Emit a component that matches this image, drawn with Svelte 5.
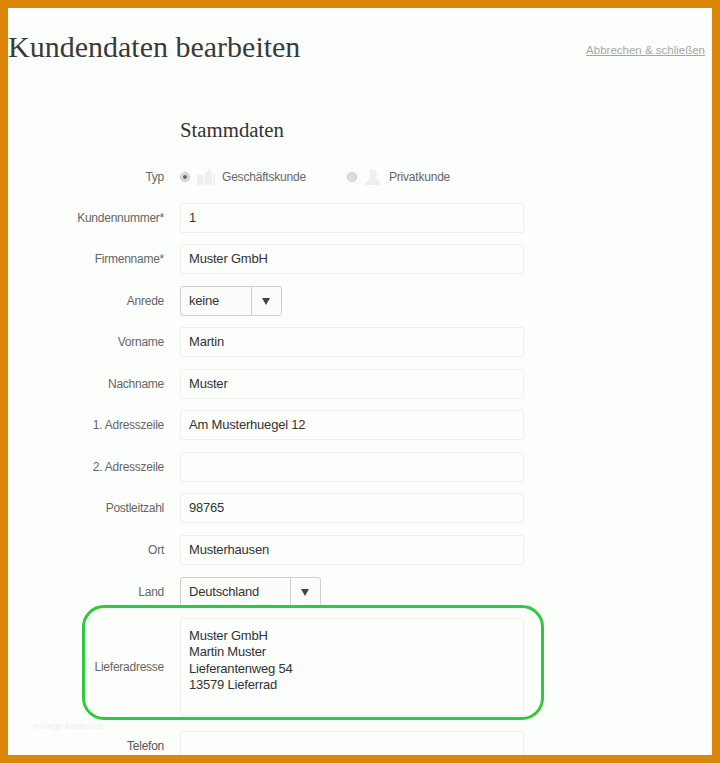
<script>
  const rowsTop = [
    { label: 'Kundennummer*', value: '1' },
    { label: 'Firmenname*', value: 'Muster GmbH' },
    { label: 'Anrede', value: 'keine', select: 'short' },
    { label: 'Vorname', value: 'Martin' },
    { label: 'Nachname', value: 'Muster' },
    { label: '1. Adresszeile', value: 'Am Musterhuegel 12' },
    { label: '2. Adresszeile', value: '' },
    { label: 'Postleitzahl', value: '98765' },
    { label: 'Ort', value: 'Musterhausen' },
    { label: 'Land', value: 'Deutschland', select: 'long' }
  ];

  const address = ['Muster GmbH', 'Martin Muster', 'Lieferantenweg 54', '13579 Lieferrad'];
</script>

<div class="frame">
  <div class="page">
    <header class="head">
      <h1>Kundendaten bearbeiten</h1>
      <a class="cancel" href="#top">Abbrechen &amp; schließen</a>
    </header>

    <h2>Stammdaten</h2>

    <div class="row type-row">
      <span class="label">Typ</span>
      <div class="types">
        <span class="type">
          <span class="radio checked"></span>
          <svg class="type-icon" viewBox="0 0 18 16" width="18" height="16">
            <path d="M0 6h7v10H0zM8 3h3V0h3v3h1v13H8zM16 6h2v10h-2z" fill="#eef0ee" />
          </svg>
          <span class="type-text">Geschäftskunde</span>
        </span>
        <span class="type">
          <span class="radio"></span>
          <svg class="type-icon" viewBox="0 0 18 16" width="18" height="16">
            <circle cx="9" cy="4.5" r="4" fill="#eef0ee" />
            <path d="M7 8h4l6 6v2H1v-2z" fill="#eef0ee" />
          </svg>
          <span class="type-text">Privatkunde</span>
        </span>
      </div>
    </div>

    {#each rowsTop as row}
      <div class="row">
        <span class="label">{row.label}</span>
        {#if row.select}
          <div class="select {row.select}">
            <span class="select-value">{row.value}</span>
            <span class="select-arrow"></span>
          </div>
        {:else}
          <div class="input">{row.value}</div>
        {/if}
      </div>
    {/each}

    <div class="row area-row">
      <span class="label">Lieferadresse</span>
      <div class="input area">
        {#each address as line}
          <div>{line}</div>
        {/each}
      </div>
    </div>

    <div class="row">
      <span class="label dark">Telefon</span>
      <div class="input"></div>
    </div>

    <div class="highlight"></div>
    <span class="watermark">vorlage-kostenlos</span>
  </div>
</div>

<style>
  :global(body) {
    margin: 0;
  }

  .frame {
    width: 720px;
    height: 763px;
    box-sizing: border-box;
    border: 8px solid #dd8506;
    overflow: hidden;
    background: #fcfefb;
    font-family: "Liberation Sans", Arial, sans-serif;
  }

  .page {
    position: relative;
    height: 747px;
    overflow: hidden;
  }

  .head {
    display: flex;
    justify-content: space-between;
    align-items: flex-start;
    height: 103px;
    padding-right: 7px;
  }

  h1 {
    margin: 21px 0 0 0;
    font-family: "Liberation Serif", "Times New Roman", serif;
    font-size: 30px;
    line-height: 36px;
    font-weight: 400;
    color: #3a3a3a;
  }

  .cancel {
    margin-top: 35px;
    font-size: 11.5px;
    line-height: 15px;
    color: #a6a6a6;
    text-decoration: underline;
  }

  h2 {
    margin: 0 0 0 172px;
    height: 54px;
    font-family: "Liberation Serif", "Times New Roman", serif;
    font-size: 20.8px;
    line-height: 38px;
    font-weight: 400;
    color: #333;
  }

  .row {
    display: flex;
    align-items: center;
    height: 30px;
    margin-bottom: 11.55px;
  }

  .type-row {
    height: 24px;
    margin-bottom: 13.6px;
  }

  .label {
    width: 156px;
    margin-right: 16px;
    flex-shrink: 0;
    text-align: right;
    font-size: 12px;
    letter-spacing: -0.25px;
    color: #666;
  }

  .label.dark {
    color: #555;
  }

  .types {
    display: flex;
    gap: 41px;
  }

  .type {
    display: flex;
    align-items: center;
  }

  .radio {
    width: 10px;
    height: 10px;
    box-sizing: border-box;
    border-radius: 50%;
    margin-right: 7px;
    background: #dcdcdc;
    border: 1px solid #c8c8c8;
    display: flex;
    align-items: center;
    justify-content: center;
  }

  .radio.checked::after {
    content: "";
    width: 4px;
    height: 4px;
    border-radius: 50%;
    background: #666;
  }

  .type-icon {
    margin-right: 7px;
  }

  .type-text {
    font-size: 12px;
    letter-spacing: -0.2px;
    color: #666;
  }

  .input {
    width: 344px;
    height: 30px;
    box-sizing: border-box;
    border: 1px solid #eef0ec;
    border-radius: 2px;
    padding: 0 8px;
    font-size: 13px;
    letter-spacing: -0.2px;
    line-height: 27px;
    color: #333;
  }

  .area-row {
    height: 98px;
    margin-bottom: 15px;
  }

  .input.area {
    height: 98px;
    padding-top: 9px;
    line-height: 16.3px;
  }

  .select {
    display: flex;
    height: 30px;
    box-sizing: border-box;
    border: 1px solid #cfd0cd;
    border-radius: 3px;
    font-size: 13px;
    letter-spacing: -0.2px;
    color: #333;
    background: #fcfdfb;
  }

  .select.short {
    width: 102px;
  }

  .select.long {
    width: 141px;
  }

  .select-value {
    flex: 1;
    padding-left: 8px;
    line-height: 28px;
    border-right: 1px solid #cfd0cd;
  }

  .select-arrow {
    width: 29px;
    position: relative;
  }

  .select-arrow::after {
    content: "";
    position: absolute;
    left: 10px;
    top: 11px;
    border-left: 4.5px solid transparent;
    border-right: 4.5px solid transparent;
    border-top: 7px solid #444;
  }

  .highlight {
    position: absolute;
    left: 74px;
    top: 597px;
    width: 462px;
    height: 115px;
    box-sizing: border-box;
    border: 3px solid #2fc93c;
    border-radius: 22px;
  }

  .watermark {
    position: absolute;
    left: 25px;
    top: 713px;
    font-size: 9px;
    color: #eef0ed;
  }
</style>
